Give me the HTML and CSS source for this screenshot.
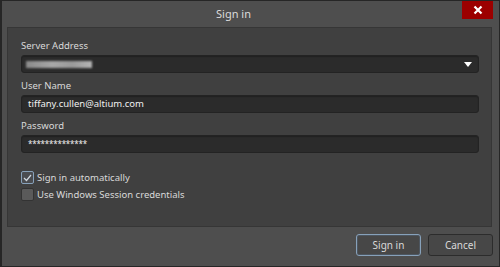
FILE: index.html
```html
<!DOCTYPE html>
<html lang="en">
<head>
    <meta charset="UTF-8">
    <title>Sign in</title>
    <link rel="stylesheet" href="styles.css">
</head>
<body>
    <div class="window">
        <div class="titlebar">
            <span></span>
            <span class="title">Sign in</span>
            <button class="close" aria-label="Close">
                <svg width="10" height="10" viewBox="0 0 10 10">
                    <path d="M1.5 1.5 L8.5 8.5 M8.5 1.5 L1.5 8.5" stroke="#fff" stroke-width="2.2"/>
                </svg>
            </button>
        </div>

        <div class="panel">
            <div class="field-group">
                <label>Server Address</label>
                <div class="field select">
                    <span class="blurred"></span>
                    <svg class="arrow" width="8" height="5" viewBox="0 0 8 5">
                        <path d="M0 0 H8 L4 5 Z" fill="#fff"/>
                    </svg>
                </div>
            </div>
            <div class="field-group">
                <label>User Name</label>
                <div class="field">tiffany.cullen@altium.com</div>
            </div>
            <div class="field-group">
                <label>Password</label>
                <div class="field password">**************</div>
            </div>

            <div class="checks">
                <div class="check-row">
                    <span class="box checked">
                        <svg width="9" height="8" viewBox="0 0 9 8">
                            <path d="M1 4 L3.5 6.5 L8 1" fill="none" stroke="#d0d8e0" stroke-width="1.2"/>
                        </svg>
                    </span>
                    <span>Sign in automatically</span>
                </div>
                <div class="check-row">
                    <span class="box"></span>
                    <span>Use Windows Session credentials</span>
                </div>
            </div>
        </div>

        <div class="buttons">
            <button class="btn default">Sign in</button>
            <button class="btn">Cancel</button>
        </div>
    </div>
</body>
</html>
```

FILE: styles.css
```css
/* Dark sign-in dialog */

:root {
    --frame: #262626;
    --window: #4e4e4e;
    --panel: #404040;
    --panel-line: #363636;
    --input: #2b2b2b;
    --input-line: #232323;
    --text: #d9d9d9;
    --text-bright: #f0f0f0;
    --accent: #87a1ba;
    --red: #9c0000;
}

body {
    margin: 0;
    font-family: 'Noto Sans', 'Open Sans', sans-serif;
    font-size: 9.5px;
    color: var(--text);
}

.window {
    width: 500px;
    height: 267px;
    box-sizing: border-box;
    border: 1px solid var(--frame);
    border-left-width: 2px;
    background: var(--window);
    display: flex;
    flex-direction: column;
}

/* Title bar */
.titlebar {
    height: 26px;
    display: grid;
    grid-template-columns: 1fr auto 1fr;
    align-items: start;
}

.title {
    font-size: 11px;
    line-height: 26px;
    color: #dcdcdc;
    margin-left: -34px;
}

.close {
    justify-self: end;
    width: 31px;
    height: 18px;
    margin-right: 6px;
    padding: 0;
    border: none;
    background: var(--red);
    display: flex;
    align-items: center;
    justify-content: center;
}

/* Main panel */
.panel {
    height: 200px;
    box-sizing: border-box;
    margin: 0 7px 0 5px;
    padding: 10px 12px 0 13px;
    background: var(--panel);
    border: 1px solid var(--panel-line);
    display: flex;
    flex-direction: column;
    gap: 5px;
}

.field-group label {
    display: block;
    line-height: 16px;
    margin-bottom: 1px;
    color: var(--text);
}

.field {
    height: 18px;
    box-sizing: border-box;
    padding: 0 5px 0 6px;
    background: var(--input);
    border: 1px solid var(--input-line);
    border-radius: 3px;
    box-shadow: inset 0 1px 1px rgba(0, 0, 0, 0.25);
    color: var(--text-bright);
    line-height: 16px;
    display: flex;
    align-items: center;
}

.field.select {
    justify-content: space-between;
}

.blurred {
    width: 66px;
    height: 7px;
    background: linear-gradient(90deg, #8a8a8a, #a8a8a8 40%, #9a9a9a 70%, #b5b5b5);
    filter: blur(0.8px);
    margin-left: -2px;
}

.arrow {
    margin-right: 1px;
}

.field.password {
    font-size: 8px;
    letter-spacing: -0.2px;
}

/* Checkboxes */
.checks {
    margin-top: 13px;
    display: flex;
    flex-direction: column;
    gap: 4px;
}

.check-row {
    display: flex;
    align-items: center;
    gap: 3px;
    height: 13px;
}

.box {
    width: 13px;
    height: 13px;
    box-sizing: border-box;
    border: 1px solid #333;
    border-radius: 2px;
    background: #5a5a5a;
    display: flex;
    align-items: center;
    justify-content: center;
}

.box.checked {
    border: 1.5px solid var(--accent);
    background: #4a4c50;
}

/* Footer buttons */
.buttons {
    display: flex;
    justify-content: flex-end;
    gap: 7px;
    padding: 7px 6px 0 0;
}

.btn {
    width: 65px;
    height: 22px;
    padding: 0;
    font-family: inherit;
    font-size: 10px;
    color: var(--text);
    background: #474747;
    border: 1px solid #2c2c2c;
    border-radius: 3px;
}

.btn.default {
    border-color: var(--accent);
    box-shadow: inset 0 0 0 1px #4d5660;
}
```
